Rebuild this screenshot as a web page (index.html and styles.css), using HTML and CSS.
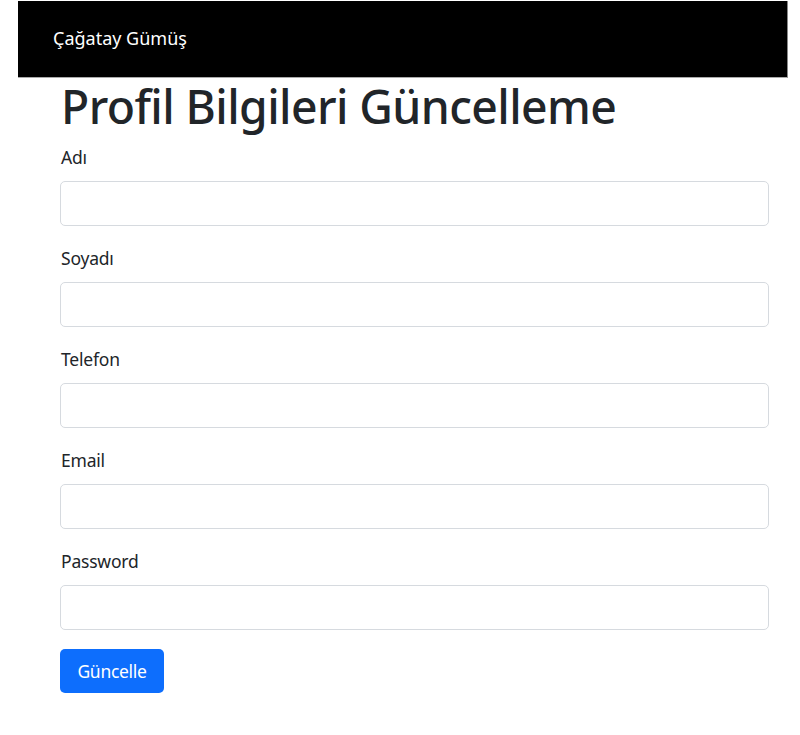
FILE: index.html
```html
<!DOCTYPE html>
<html lang="tr">
<head>
<meta charset="utf-8">
<title>Profil Bilgileri Güncelleme</title>
<link rel="stylesheet" href="styles.css">
</head>
<body>
<nav class="navbar"><span class="brand">Çağatay Gümüş</span></nav>
<main class="container">
  <h1 class="title">Profil Bilgileri Güncelleme</h1>
  <form class="form">
    <div class="group"><label class="label">Adı</label><input class="input" type="text"></div>
    <div class="group"><label class="label">Soyadı</label><input class="input" type="text"></div>
    <div class="group"><label class="label">Telefon</label><input class="input" type="text"></div>
    <div class="group"><label class="label">Email</label><input class="input" type="text"></div>
    <div class="group"><label class="label">Password</label><input class="input" type="password"></div>
    <div><button type="button" class="btn">Güncelle</button></div>
  </form>
</main>
</body>
</html>
```
FILE: styles.css
```css
html, body { margin: 0; padding: 0; background: #fff; }
body {
  font-family: "Noto Sans", "Open Sans", sans-serif;
  color: #212529;
}
.navbar {
  margin: 1px 0 0 18px;
  width: 770px;
  height: 77px;
  background: #000;
  border-right: 1px solid #888;
  border-bottom: 1px solid #aaa;
  display: flex;
  align-items: center;
  padding-left: 35px;
  padding-bottom: 2px;
  box-sizing: border-box;
}
.brand { color: #fff; font-size: 18px; letter-spacing: 0; }
.container { padding: 0 31px 0 60px; }
.title {
  margin: 3px 0 10px 1px;
  font-size: 46.3px;
  font-weight: 500;
  line-height: 52px;
  letter-spacing: -0.6px;
}
.form { display: flex; flex-direction: column; }
.group { display: flex; flex-direction: column; margin-bottom: 18px; }
.label { font-size: 17.5px; line-height: 26px; margin: 1px 0 11px 1px; letter-spacing: -0.2px; }
.input {
  height: 45px;
  box-sizing: border-box;
  border: 1px solid #d6dadf;
  border-radius: 5px;
  width: 709px;
  font-size: 17px;
  padding: 0 12px;
  margin: 0;
}
.btn {
  margin-top: 1px;
  background: #0d6efd;
  color: #fff;
  border: none;
  border-radius: 5px;
  width: 104px;
  height: 44px;
  font-family: "Noto Sans", sans-serif;
  font-size: 17.5px;
  letter-spacing: -0.3px;
  padding: 0;
}
```
